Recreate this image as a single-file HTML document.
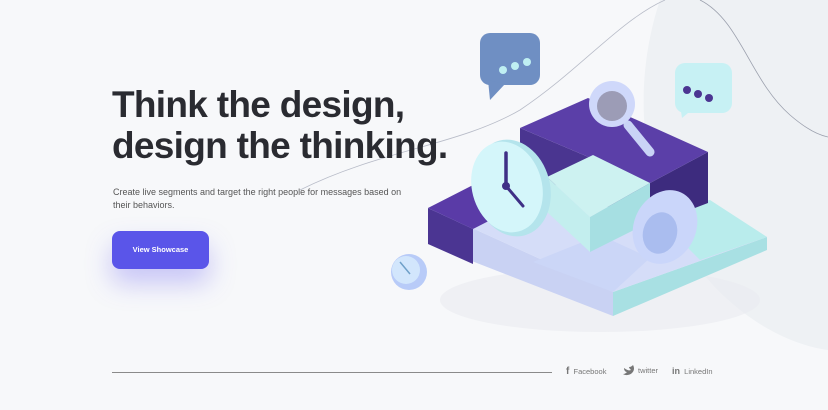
<!DOCTYPE html>
<html><head><meta charset="utf-8"><style>
html,body{margin:0;padding:0}
body{width:828px;height:410px;overflow:hidden;background:#f7f8fa;position:relative;font-family:"Liberation Sans",sans-serif}
.h{position:absolute;left:112px;top:84px;font-size:37px;font-weight:bold;line-height:41px;color:#2a2b31;letter-spacing:-0.7px;margin:0}
.p{position:absolute;left:113px;top:186px;font-size:9px;line-height:13px;color:#555;width:300px}
.btn{position:absolute;left:112px;top:231px;width:97px;height:38px;border-radius:8px;background:#5a55e9;color:#fff;font-size:7.5px;font-weight:bold;text-align:center;line-height:38px;box-shadow:0 14px 26px rgba(110,100,240,.35)}
.line{position:absolute;left:112px;top:372px;width:440px;height:1px;background:#8a8a8a}
.soc{position:absolute;top:366px;font-size:7.5px;color:#777}
</style></head><body>
<svg width="828" height="410" style="position:absolute;left:0;top:0">
<path d="M660 0 C630 90 640 200 700 270 C740 320 790 345 828 350 L828 0 Z" fill="#eef1f4"/>
<path d="M300 190 C380 150 460 145 520 110 C580 70 620 20 665 0" stroke="#b8bcc8" stroke-width="0.8" fill="none"/>
<path d="M700 0 C740 20 750 80 790 115 C805 128 818 135 828 137" stroke="#9ba0ad" stroke-width="0.8" fill="none"/>
<ellipse cx="600" cy="300" rx="160" ry="32" fill="#e9ebf0" opacity=".6"/>
<!-- lower slab -->
<polygon points="428,208 613,292 613,316 428,244" fill="#c9d2f3"/>
<polygon points="428,208 473,229 473,264 428,244" fill="#4b3592"/>
<polygon points="613,292 767,237 767,250 613,316" fill="#a8e0e3"/>
<polygon points="428,208 530,158 767,237 613,292" fill="#d5ddf8"/>
<polygon points="428,208 475,184 520,205 473,229" fill="#5a3ba7"/>
<polygon points="650,210 710,200 767,237 700,260" fill="#b9ecec"/>
<polygon points="533,262 600,235 650,258 613,292" fill="#cbd6f7"/>
<!-- upper tier -->
<polygon points="520,128 650,183 650,225 520,170" fill="#4a3590"/>
<polygon points="650,183 708,152 708,203 650,225" fill="#3d2b7e"/>
<polygon points="520,128 588,98 708,152 650,183" fill="#5b3fa8"/>
<!-- teal cube -->
<polygon points="547,177 590,217 590,252 547,212" fill="#c3eeee"/>
<polygon points="590,217 650,183 650,222 590,252" fill="#a6dfe2"/>
<polygon points="547,177 593,155 650,183 590,217" fill="#cdf2f1"/>
<!-- clock -->
<ellipse cx="512" cy="188" rx="38" ry="49" transform="rotate(-15 512 188)" fill="#b4e4ec"/>
<ellipse cx="507" cy="187" rx="35" ry="46" transform="rotate(-15 507 187)" fill="#d4f6fa"/>
<line x1="506" y1="153" x2="506" y2="186" stroke="#3f2f86" stroke-width="3.5" stroke-linecap="round"/>
<line x1="506" y1="186" x2="523" y2="206" stroke="#3f2f86" stroke-width="3" stroke-linecap="round"/>
<circle cx="506" cy="186" r="4" fill="#3f2f86"/>
<!-- magnifier -->
<line x1="628" y1="125" x2="650" y2="152" stroke="#c9d3f6" stroke-width="9" stroke-linecap="round"/>
<circle cx="612" cy="104" r="23" fill="#cfd8fa"/>
<circle cx="612" cy="106" r="15" fill="#9c9cb6"/>
<!-- toggle -->
<ellipse cx="665" cy="227" rx="31" ry="38" transform="rotate(25 665 227)" fill="#cad6fa"/>
<ellipse cx="660" cy="233" rx="17" ry="21" transform="rotate(15 660 233)" fill="#aabdef"/>
<!-- stopwatch -->
<circle cx="409" cy="272" r="18" fill="#b8cbf8"/>
<circle cx="406" cy="270" r="14" fill="#d2e6fc"/>
<line x1="400" y1="262" x2="410" y2="274" stroke="#6fa0c8" stroke-width="1.5"/>
<!-- bubbles -->
<rect x="480" y="33" width="60" height="52" rx="10" fill="#6f8fc3"/>
<polygon points="488,80 490,100 505,84" fill="#6f8fc3"/>
<circle cx="503" cy="70" r="4" fill="#bfeff2"/><circle cx="515" cy="66" r="4" fill="#bfeff2"/><circle cx="527" cy="62" r="4" fill="#bfeff2"/>
<rect x="675" y="63" width="57" height="50" rx="10" fill="#c7f1f4"/>
<polygon points="680,105 682,118 694,108" fill="#c7f1f4"/>
<circle cx="687" cy="90" r="4" fill="#4b3592"/><circle cx="698" cy="94" r="4" fill="#4b3592"/><circle cx="709" cy="98" r="4" fill="#4b3592"/>
<!-- twitter bird -->
<path d="M624 368 C627 370 629 371 631 370 C630 369 629 368 629 367 C631 367 632 366 633 365 C634 367 635 370 632 373 C630 375 626 376 623 374 C625 374 626 373 627 372 C625 372 624 370 624 368 Z" fill="#777"/>
</svg>
<h1 class="h">Think the design,<br>design the thinking.</h1>
<div class="p">Create live segments and target the right people for messages based on their behaviors.</div>
<div class="btn">View Showcase</div>
<div class="line"></div>
<div class="soc" style="left:566px"><b style="font-size:10px">f</b>&nbsp; Facebook</div>
<div class="soc" style="left:638px">twitter</div>
<div class="soc" style="left:672px"><b style="font-size:9px">in</b>&nbsp; LinkedIn</div>
</body></html>
